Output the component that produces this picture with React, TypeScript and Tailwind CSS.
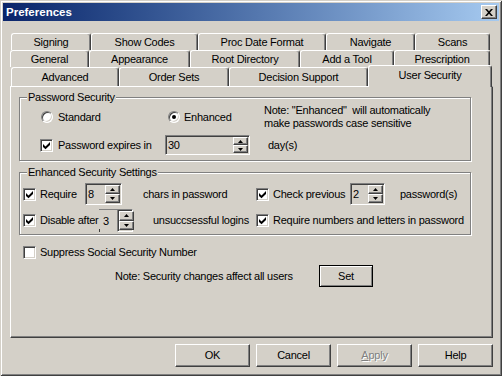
import React from 'react'

const raised =
  'bg-[#d4d0c8] border border-t-white border-l-white border-b-[#404040] border-r-[#404040] shadow-[inset_-1px_-1px_0_#808080]'
const sunken =
  'border border-t-[#808080] border-l-[#808080] border-b-white border-r-white shadow-[inset_1px_1px_0_#404040,inset_-1px_-1px_0_#d4d0c8]'
const etched = 'border border-[#808080] shadow-[1px_1px_0_#fff,inset_1px_1px_0_#fff]'

function Check({ on }: { on?: boolean }) {
  return (
    <span className={`relative inline-block w-[13px] h-[13px] shrink-0 bg-white ${sunken}`}>
      {on && (
        <svg className="absolute left-[2px] top-[2px]" width="7" height="8" viewBox="0 0 7 8">
          <path d="M0 2L2.5 4.5L7 0v3L2.5 7.3 0 5z" fill="#000" />
        </svg>
      )}
    </span>
  )
}

function Radio({ on }: { on?: boolean }) {
  return (
    <span className={`relative inline-block w-[12px] h-[12px] shrink-0 rounded-full bg-white ${sunken}`}>
      {on && <span className="absolute left-[3px] top-[3px] w-[4px] h-[4px] rounded-full bg-black" />}
    </span>
  )
}

function Arrow({ up }: { up?: boolean }) {
  return (
    <svg width="5" height="3" viewBox="0 0 5 3">
      <path d={up ? 'M2.5 0L5 3H0z' : 'M0 0h5L2.5 3z'} fill="#000" />
    </svg>
  )
}

function SpinBtns() {
  return (
    <div className="flex flex-col w-[15px] h-full shrink-0">
      <div className={`flex-1 flex items-center justify-center ${raised}`}>
        <Arrow up />
      </div>
      <div className={`flex-1 flex items-center justify-center ${raised}`}>
        <Arrow />
      </div>
    </div>
  )
}

function Spin({ value, className }: { value: string; className: string }) {
  return (
    <div className={`flex p-[1px] bg-[#d4d0c8] ${sunken} ${className}`}>
      <span className="flex-1 flex items-center pl-[1px]">{value}</span>
      <SpinBtns />
    </div>
  )
}

function Btn({ children, className }: { children: React.ReactNode; className?: string }) {
  return (
    <div className={`flex items-center justify-center h-[23px] w-[75px] ${raised} ${className ?? ''}`}>
      {children}
    </div>
  )
}

function Tab({ label, className }: { label: string; className: string }) {
  return (
    <div
      className={`flex items-center justify-center rounded-t-[3px] border-t border-l border-r border-t-white border-l-white border-r-[#404040] shadow-[inset_-1px_0_0_#808080] ${className}`}
    >
      {label}
    </div>
  )
}

export default function App() {
  return (
    <div className="w-[502px] h-[376px] p-[3px] bg-[#d4d0c8] text-black text-[11px] leading-[13px] tracking-[-0.25px] font-['Liberation_Sans',Arial,sans-serif] shadow-[inset_1px_1px_0_#d4d0c8,inset_-1px_-1px_0_#404040,inset_2px_2px_0_#fff,inset_-2px_-2px_0_#808080] overflow-hidden">
      {/* title bar */}
      <div className="flex items-center h-[18px] pl-[3px] bg-linear-to-r from-[#0a246a] to-[#a6caf0]">
        <span className="flex-1 text-white font-bold text-[11.5px] tracking-normal">Preferences</span>
        <div className={`flex items-center justify-center w-[16px] h-[14px] mr-[2px] ${raised}`}>
          <svg width="8" height="7" viewBox="0 0 8 7">
            <path d="M0 0h2l2 2.2L6 0h2L5 3.5 8 7H6L4 4.8 2 7H0l3-3.5z" fill="#000" />
          </svg>
        </div>
      </div>

      {/* tabs */}
      <div className="mt-[12px]">
        <div className="flex h-[17px] ml-[8px]">
          <Tab label="Signing" className="w-[80px]" />
          <Tab label="Show Codes" className="w-[107px]" />
          <Tab label="Proc Date Format" className="w-[128px]" />
          <Tab label="Navigate" className="w-[89px]" />
          <Tab label="Scans" className="w-[75px]" />
        </div>
        <div className="flex h-[17px] ml-[7px]">
          <Tab label="General" className="w-[79px]" />
          <Tab label="Appearance" className="w-[101px]" />
          <Tab label="Root Directory" className="w-[110px]" />
          <Tab label="Add a Tool" className="w-[94px]" />
          <Tab label="Prescription" className="w-[96px]" />
        </div>
        <div className="flex items-start h-[19px] ml-[8px]">
          <Tab label="Advanced" className="w-[108px] h-[19px]" />
          <Tab label="Order Sets" className="w-[110px] h-[19px]" />
          <Tab label="Decision Support" className="w-[139px] h-[19px]" />
          <Tab
            label="User Security"
            className="relative z-10 w-[124px] h-[22px] -mt-[2px] pb-[3px] bg-[#d4d0c8]"
          />
        </div>
      </div>

      {/* panel */}
      <div className="ml-[7px] w-[483px] h-[252px] pl-[8px] pt-[10px] border border-t-white border-l-white border-b-[#404040] border-r-[#404040] shadow-[inset_-1px_-1px_0_#808080]">
        <div className={`relative w-[452px] h-[64px] pt-[6px] ${etched}`}>
          <span className="absolute left-[7px] -top-[8px] px-[1px] bg-[#d4d0c8] leading-[14px]">Password Security</span>
          <div className="flex h-[26px]">
            <div className="flex items-center gap-[5px] ml-[21px] w-[127px]">
              <Radio />
              <span>Standard</span>
            </div>
            <div className="flex items-center gap-[4px] w-[96px]">
              <Radio on />
              <span>Enhanced</span>
            </div>
            <div className="whitespace-pre">
              {'Note: "Enhanced"  will automatically\nmake passwords case sensitive'}
            </div>
          </div>
          <div className="flex items-center h-[20px] mt-[5px]">
            <div className="flex items-center gap-[5px] ml-[20px] w-[125px]">
              <Check on />
              <span>Password expires in</span>
            </div>
            <Spin value="30" className="w-[85px] h-[20px]" />
            <span className="ml-[18px]">day(s)</span>
          </div>
        </div>

        <div className={`relative mt-[11px] w-[452px] h-[63px] pt-[10px] ${etched}`}>
          <span className="absolute left-[7px] -top-[8px] px-[1px] bg-[#d4d0c8] leading-[14px]">
            Enhanced Security Settings
          </span>
          <div className="flex items-center h-[22px]">
            <div className="flex items-center gap-[4px] ml-[3px] w-[62px]">
              <Check on />
              <span>Require</span>
            </div>
            <Spin value="8" className="w-[37px] h-[22px]" />
            <span className="w-[134px] pl-[21px]">chars in password</span>
            <div className="flex items-center gap-[4px] w-[94px]">
              <Check on />
              <span>Check previous</span>
            </div>
            <Spin value="2" className="w-[35px] h-[22px]" />
            <span className="ml-[15px]">password(s)</span>
          </div>
          <div className="flex items-center h-[23px] mt-[4px]">
            <div className="flex items-center gap-[4px] ml-[3px] w-[76px] whitespace-nowrap">
              <Check on />
              <span>Disable after</span>
            </div>
            <div className="flex w-[34px] h-[23px]">
              <div className="relative flex-1 flex items-center pl-[4px] border-t border-[#808080]">
                3
                <span className="absolute left-0 bottom-0 w-px h-[3px] bg-[#404040]" />
              </div>
              <div className={`flex p-[1px] w-[16px] ${sunken}`}>
                <SpinBtns />
              </div>
            </div>
            <span className="w-[123px] pl-[20px] whitespace-nowrap">unsuccsessful logins</span>
            <div className="flex items-center gap-[4px]">
              <Check on />
              <span>Require numbers and letters in password</span>
            </div>
          </div>
        </div>

        <div className="flex items-center gap-[4px] h-[14px] mt-[10px] ml-[4px]">
          <Check />
          <span>Suppress Social Security Number</span>
        </div>

        <div className="flex items-center h-[22px] mt-[6px]">
          <span className="ml-[96px] w-[204px]">Note: Security changes affect all users</span>
          <div className="flex items-center justify-center w-[54px] h-[22px] bg-[#d4d0c8] border border-black shadow-[inset_1px_1px_0_#fff,inset_-1px_-1px_0_#808080]">
            Set
          </div>
        </div>
      </div>

      {/* buttons */}
      <div className="flex gap-[6px] mt-[6px] ml-[172px]">
        <Btn>OK</Btn>
        <Btn>Cancel</Btn>
        <Btn className="text-[#808080] [text-shadow:1px_1px_0_#fff]">
          <span>
            <span className="underline">A</span>pply
          </span>
        </Btn>
        <Btn>Help</Btn>
      </div>
    </div>
  )
}
